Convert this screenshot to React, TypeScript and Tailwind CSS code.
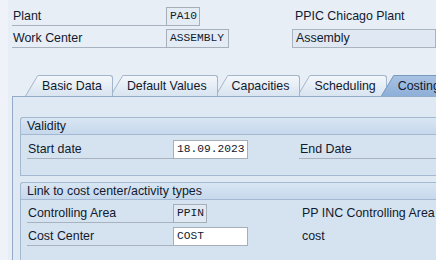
import React from "react";

const label = "font-['Liberation_Sans',sans-serif] text-[12.4px]";
const mono = "font-['Liberation_Mono',monospace] text-[11.25px]";

type TabDef = { label: string; selected?: boolean; cls: string };

const tabs: TabDef[] = [
  { label: "Basic Data", cls: "z-[6]" },
  { label: "Default Values", cls: "z-[5] -ml-[3px]" },
  { label: "Capacities", cls: "z-[4] -ml-[3px]" },
  { label: "Scheduling", cls: "z-[3] -ml-[3px]" },
  { label: "Costing", selected: true, cls: "z-[7] -ml-[6px]" },
];

const Tab = ({ t, i }: { t: TabDef; i: number }) => {
  const top = t.selected ? "#a8c2e3" : "#f3f7fb";
  const bottom = t.selected ? "#8eafd8" : "#d8e4f1";
  const line = t.selected ? "#7c9ac0" : "#a3b5ca";
  return (
    <div className={`relative flex h-[21px] shrink-0 ${t.cls}`}>
      <svg width="13" height="21" className="shrink-0">
        <defs>
          <linearGradient id={`tg${i}`} x1="0" y1="0" x2="0" y2="1">
            <stop offset="0" stopColor={top} />
            <stop offset="1" stopColor={bottom} />
          </linearGradient>
        </defs>
        <path d="M0 21 L12.5 0 L13 0 L13 21 Z" fill={`url(#tg${i})`} />
        <path d="M0.5 21 L12.8 0.5 L13 0.5" stroke={line} fill="none" />
      </svg>
      <div
        className={
          t.selected
            ? "h-full whitespace-nowrap border-t border-[#7c9ac0] bg-gradient-to-b from-[#a8c2e3] to-[#8eafd8] pl-[4px] pr-[20px] leading-[20px]"
            : "h-full whitespace-nowrap rounded-tr-[3px] border-t border-r border-[#a3b5ca] bg-gradient-to-b from-[#f3f7fb] to-[#d8e4f1] pl-[4px] pr-[10px] leading-[20px]"
        }
      >
        {t.label}
      </div>
    </div>
  );
};

const GroupHeader = ({ title }: { title: string }) => (
  <div className="h-[18px] rounded-tl-[3px] border-t border-l border-b border-[#a4b9d1] bg-gradient-to-b from-[#d9e6f3] to-[#c6d8ec] pl-[6px] leading-[17px] whitespace-nowrap">
    {title}
  </div>
);

export default function App() {
  return (
    <div className={`flex h-[260px] w-[436px] overflow-hidden bg-[#e8eef6] text-[#111a2e] ${label}`}>
      <div className="w-2 shrink-0 bg-[#eff3f9]" />
      <div className="flex min-w-0 flex-1 flex-col">
        {/* header fields */}
        <div className="flex flex-col gap-[3px] pl-1 pt-[7px]">
          <div className="flex items-end">
            <div className="h-[19px] w-[154px] shrink-0 border-b border-[#a9b3bf] pl-[1px] leading-[19px]">Plant</div>
            <div className={`h-[19px] w-[34px] shrink-0 border border-[#a7afb9] bg-[#e3ebf4] pl-[3px] leading-[17px] ${mono}`}>PA10</div>
            <div className="ml-[92px] h-[19px] shrink-0 pl-[3px] leading-[19px] whitespace-nowrap">PPIC Chicago Plant</div>
          </div>
          <div className="flex items-end">
            <div className="h-[19px] w-[154px] shrink-0 border-b border-[#a9b3bf] pl-[1px] leading-[19px]">Work Center</div>
            <div className={`h-[19px] w-[63px] shrink-0 border border-[#a7afb9] bg-[#e3ebf4] pl-[3px] leading-[17px] ${mono}`}>ASSEMBLY</div>
            <div className="ml-[63px] h-[19px] flex-1 border border-[#aab4bf] bg-[#e0e9f3] pl-[3px] leading-[17px]">Assembly</div>
          </div>
        </div>

        {/* tab strip */}
        <div className="mt-[27px] flex pl-[17px]">
          {tabs.map((t, i) => (
            <Tab key={t.label} t={t} i={i} />
          ))}
        </div>

        {/* tab panel */}
        <div className="relative z-[8] ml-1 flex-1 border-t border-l border-[#93abc8] bg-[#dfe9f4] pl-[7px] pt-5">
          <div className="flex flex-col gap-[6px]">
            {/* Validity */}
            <div className="flex flex-col">
              <GroupHeader title="Validity" />
              <div className="border-b border-l border-[#a4b9d1] bg-[#d5e3f1] pb-4 pl-[6px] pt-[5px]">
                <div className="flex items-end">
                  <div className="h-[19px] w-[146px] shrink-0 border-b border-[#a9b3bf] pl-[1px] leading-[19px]">Start date</div>
                  <div className={`h-[19px] w-[75px] shrink-0 border border-[#a6aeb8] bg-white pl-[3px] leading-[17px] ${mono}`}>18.09.2023</div>
                  <div className="ml-[51px] h-[19px] flex-1 border-b border-[#a9b3bf] pl-[1px] leading-[19px]">End Date</div>
                </div>
              </div>
            </div>

            {/* Link to cost center */}
            <div className="flex flex-col">
              <GroupHeader title="Link to cost center/activity types" />
              <div className="flex flex-col gap-[4px] border-l border-[#a4b9d1] bg-[#d5e3f1] pb-4 pl-[6px] pt-[4px]">
                <div className="flex items-end">
                  <div className="h-[19px] w-[146px] shrink-0 border-b border-[#a9b3bf] pl-[1px] leading-[19px]">Controlling Area</div>
                  <div className={`h-[19px] w-[34px] shrink-0 border border-[#a6aeb8] bg-[#e0e9f3] pl-[3px] leading-[17px] ${mono}`}>PPIN</div>
                  <div className="ml-[95px] h-[19px] shrink-0 leading-[19px] whitespace-nowrap">PP INC Controlling Area</div>
                </div>
                <div className="flex items-end">
                  <div className="h-[19px] w-[146px] shrink-0 border-b border-[#a9b3bf] pl-[1px] leading-[19px]">Cost Center</div>
                  <div className={`h-[19px] w-[75px] shrink-0 border border-[#a6aeb8] bg-white pl-[3px] leading-[17px] ${mono}`}>COST</div>
                  <div className="ml-[54px] h-[19px] shrink-0 leading-[19px]">cost</div>
                </div>
              </div>
            </div>
          </div>
        </div>
      </div>
    </div>
  );
}
